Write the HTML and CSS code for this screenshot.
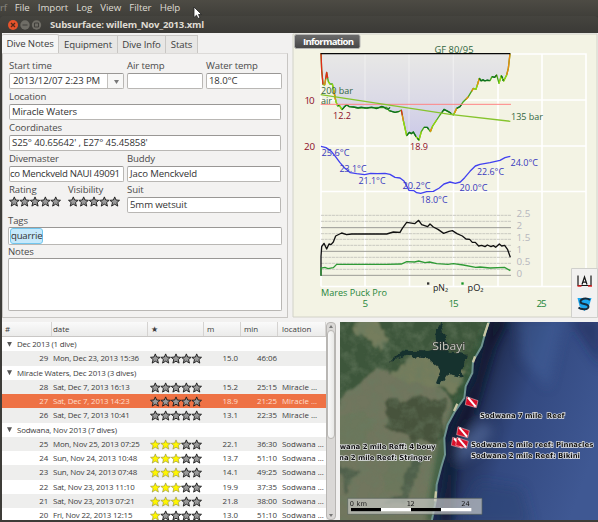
FILE: index.html
```
<!DOCTYPE html>
<html lang="en">
<head>
<meta charset="utf-8">
<title>Subsurface</title>
<link rel="stylesheet" href="styles.css">
</head>
<body>
<svg class="defs" width="0" height="0" aria-hidden="true">
  <defs>
    <path id="st" d="M5.3 .9 6.6 4 10.1 4.3 7.5 6.6 8.4 10.1 5.3 8.2 2.2 10.1 3.1 6.6 .5 4.3 4 4Z"/>
    <g id="s0"><use href="#st" fill="#999" stroke="#161616" stroke-width=".9"/></g>
    <g id="s1"><use href="#st" fill="#fff600" stroke="#8f8d38" stroke-width=".6"/></g>
    <g id="r0"><use href="#s0"/><use href="#s0" x="10.35"/><use href="#s0" x="20.7"/><use href="#s0" x="31.05"/><use href="#s0" x="41.4"/></g>
    <g id="r1"><use href="#s1"/><use href="#s0" x="10.35"/><use href="#s0" x="20.7"/><use href="#s0" x="31.05"/><use href="#s0" x="41.4"/></g>
    <g id="r3"><use href="#s1"/><use href="#s1" x="10.35"/><use href="#s1" x="20.7"/><use href="#s0" x="31.05"/><use href="#s0" x="41.4"/></g>
  </defs>
</svg>
<div class="desktop">
  <nav class="menubar"><span class="app">rf</span><span>File</span><span>Import</span><span>Log</span><span>View</span><span>Filter</span><span>Help</span></nav>
  <header class="titlebar">
    <svg class="buttons" width="34" height="12" viewBox="0 0 34 12"><circle cx="5" cy="6" r="5" fill="#e6532b"/><path d="M3 4l4 4M7 4l-4 4" stroke="#51291a" stroke-width="1.3"/><circle cx="17" cy="6" r="4.7" fill="#6f6d66"/><path d="M14.5 6h5" stroke="#403f3b"/><circle cx="28.500" cy="6" r="4.700" fill="#6f6d66"/><path d="M26.500 4h4v4h-4z" fill="none" stroke="#403f3b"/></svg>
    <h1>Subsurface: willem_Nov_2013.xml</h1>
  </header>
  <main class="window">
    <section class="top">
      <div class="notes">
        <div class="tabs"><span class="tab active">Dive Notes</span><span class="tab t2">Equipment</span><span class="tab t3">Dive Info</span><span class="tab t4">Stats</span></div>
        <form class="form">
          <div class="row three">
            <div><label>Start time</label><div class="field date"><span>2013/12/07 2:23 PM</span><i><b></b></i></div></div>
            <div><label>Air temp</label><div class="field"></div></div>
            <div><label>Water temp</label><div class="field">18.0°C</div></div>
          </div>
          <div class="row"><div><label>Location</label><div class="field">Miracle Waters</div></div></div>
          <div class="row"><div><label>Coordinates</label><div class="field coord">S25° 40.65642' , E27° 45.45858'</div></div></div>
          <div class="row two">
            <div><label>Divemaster</label><div class="field master">co Menckveld NAUI 49091</div></div>
            <div><label>Buddy</label><div class="field">Jaco Menckveld</div></div>
          </div>
          <div class="row suit">
            <div><label>Rating</label><svg class="stars" width="54" height="12"><use href="#r0"/></svg></div>
            <div><label>Visibility</label><svg class="stars" width="54" height="12"><use href="#r0"/></svg></div>
            <div><label>Suit</label><div class="field">5mm wetsuit</div></div>
          </div>
          <div class="wide"><label>Tags</label><div class="field tags"><span>quarrie</span></div></div>
          <div class="wide"><label class="short">Notes</label><div class="field area"></div></div>
        </form>
      </div>
      <div class="profile">
        <svg width="308" height="289" viewBox="290 33 308 289">
          <defs>
            <linearGradient id="depth" x1="0" y1="0" x2="0" y2="1"><stop offset="0" stop-color="#e8e8e6"/><stop offset=".5" stop-color="#dcdbe6"/><stop offset="1" stop-color="#cbc9e8"/></linearGradient>
            <linearGradient id="badge" x1="0" y1="0" x2="0" y2="1"><stop offset="0" stop-color="#6c6c6c"/><stop offset="1" stop-color="#454545"/></linearGradient>
          </defs>
          <path d="M290 33h308v289H290z" fill="#f2f1f0"/>
          <path d="M293 34h304v283H293z" fill="#f3f3e4" stroke="#d2d2c8"/>
          <path d="M321 54H586V286.500H321M365 54V286.500M409.500 54V286.500M453.500 54V286.500M498 54V286.500M542 54V286.500M321 100H586M321 146H586M321 191.500H586M321 54V286.500" fill="none" stroke="#fff" stroke-width="1.600"/>
          <g transform="translate(290 30) scale(.33333)" fill="none" stroke-width="4" stroke-linejoin="round">
            <path fill="url(#depth)" stroke="#48a819" d="M93 70L95 120 99 163 104 165 110 127 115 155 120 162 127 162 132 185 138 215 143 228 148 226 156 239 162 232 170 224 178 230 190 231 205 234 290 232 297 242 315 247 328 244 334 240 340 272 350 317 358 307 364 311 370 306 378 320 387 330 394 305 402 292 412 292 421 305 428 288 440 270 450 255 462 238 475 245 490 255 500 235 510 230 520 215 535 200 550 175 558 178 568 145 575 152 600 152 606 140 614 142 620 135 627 160 634 137 641 153 650 135 655 115 660 71"/>
            <path stroke="#fff" stroke-opacity=".35" d="M225 72V230M357 72V305M490 72V250M94 210H128"/>
            <path stroke="#96d80c" d="M99 163l5 2M115 155l5 7M127 162l5 23 6 30 5 13M148 226l8 13M340 272l10 45M378 320l9 10 7-25M421 305l7-17 12-18M490 255l10-20M550 175l8 3 10-33M627 160l7-23 7 16 9-18"/>
            <path stroke="#e12c18" d="M93 70l2 50 4 43M107 148l3-21 3 17M334 240l3 16"/>
            <path stroke="#ea8a12" d="M337 256l3 16M104 165l3-17M131 182l5 27M494 249l6-14M528 209l7-9M545 184l5-9M562 166l6-20M650 135l5-20 5-44M618 139l2-4M421 305l4-10"/>
            <path stroke="#0d6f20" d="M143 228l5-2M156 239l6-7 8-8 8 6 12 1 15 3q8-4 16-1t16 0 16 1 16-2 16 2 15-2M298 242l17 5 13-3M350 317l8-10 6 4 6-5 8 14M382 325l5 5M402 292h10l4 6M455 249l7-11 13 7 8 4M500 235l10-5 5-7M568 145l5 8 6-4 6 4 6-3 8 2M606 140l8 2 6-7M634 137l4 8M637 151l5-2"/>
            <path stroke="#080808" stroke-width="3.500" d="M92 71H661"/>
            <path stroke="#ff8585" stroke-width="3" d="M92 223H663"/>
            <path stroke="#86c42d" d="M92 194L480 253 661 274"/>
          </g>
          <g transform="translate(290 140) scale(.33333)" fill="none" stroke-width="3">
            <path stroke="#c2c2ba" stroke-width="2.500" stroke-dasharray="9 2" d="M93 226H663M93 244H663M93 281H663M93 298H663M93 316H663M93 352H663M93 370H663M93 388H663"/>
            <path stroke="#9b9b96" d="M93 263H663M93 334H663M93 406H663"/>
            <path stroke="#4040f0" stroke-width="4" stroke-linejoin="round" d="M93 19L108 23 124 34 136 49 150 68 165 85 181 98 200 101 224 104 242 100 262 101 285 100 300 103 315 112 330 114 342 123 357 151 372 152 380 158 392 160 410 155 430 154 448 144 462 132 480 126 496 130 511 126 524 113 540 94 556 78 570 73 600 68 630 61 645 53 661 49"/>
            <path stroke="#111" stroke-width="4" stroke-linejoin="round" d="M93 407V350L95 320 102 310 110 327 117 312 123 314 130 306 137 288 155 279 170 284 185 282H290L310 276 330 277 337 265 350 247 374 251 386 241 395 254 413 260 420 252 430 261 444 268 461 280 477 274 487 272 501 281 517 288 528 297 539 298 547 307 556 307 566 318 575 316 585 320 592 315 603 320 610 317 617 322 628 312 635 318 644 316 653 329 661 352"/>
            <path stroke="#2e9a35" stroke-width="4" d="M93 407V384L105 382 114 386 130 383 140 373H290L334 372 350 365 374 366 386 363 405 368 419 366 440 371 474 373 490 371 520 375 557 382 570 381 600 384 644 382 661 392"/>
            <path fill="#333" d="M411 427h7v7h-7z"/><path fill="#159525" d="M514 427h7v7h-7z"/>
          </g>
          <g class="ct">
            <text x="434.500" y="53" textLength="39" lengthAdjust="spacingAndGlyphs" fill="#316640">GF 80/95</text>
            <text x="321" y="93.500" textLength="32" lengthAdjust="spacingAndGlyphs" fill="#316640">200 bar</text>
            <text x="321" y="104" textLength="11" lengthAdjust="spacingAndGlyphs" fill="#316640">air</text>
            <text x="511" y="120" textLength="32" lengthAdjust="spacingAndGlyphs" fill="#316640">135 bar</text>
            <g fill="#8c0c28"><text x="304.500" y="104" textLength="10">10</text><text x="304" y="150" textLength="11">20</text><text x="333" y="119" textLength="18" lengthAdjust="spacingAndGlyphs">12.2</text><text x="410" y="150" textLength="18" lengthAdjust="spacingAndGlyphs">18.9</text></g>
            <g class="temp"><text x="321.500" y="156" textLength="28" lengthAdjust="spacingAndGlyphs">25.6°C</text><text x="339.500" y="171.500" textLength="27" lengthAdjust="spacingAndGlyphs">23.1°C</text><text x="358.500" y="184" textLength="27" lengthAdjust="spacingAndGlyphs">21.1°C</text><text x="402.500" y="189" textLength="28" lengthAdjust="spacingAndGlyphs">20.2°C</text><text x="420.500" y="203" textLength="27" lengthAdjust="spacingAndGlyphs">18.0°C</text><text x="459.500" y="191" textLength="28" lengthAdjust="spacingAndGlyphs">20.0°C</text><text x="477" y="174.500" textLength="27" lengthAdjust="spacingAndGlyphs">22.6°C</text><text x="510.500" y="166" textLength="27.500" lengthAdjust="spacingAndGlyphs">24.0°C</text></g>
            <g fill="#b6b6bd"><text x="516.500" y="217">2.5</text><text x="516.500" y="229">2</text><text x="516.500" y="241">1.5</text><text x="516.500" y="253">1</text><text x="516.500" y="265">0.5</text><text x="516.500" y="277">0</text></g>
            <text x="433" y="291" textLength="15" lengthAdjust="spacingAndGlyphs" fill="#171717">pN₂</text><text x="467.500" y="291" textLength="16" lengthAdjust="spacingAndGlyphs" fill="#171717">pO₂</text>
            <g fill="#26863a"><text x="321" y="296" textLength="66" lengthAdjust="spacingAndGlyphs">Mares Puck Pro</text><text x="362.500" y="306.500">5</text><text x="448.500" y="306.500" textLength="10">15</text><text x="536.500" y="306.500" textLength="10">25</text></g>
          </g>
          <rect x="294.500" y="34.500" width="65.500" height="14" rx="2" fill="url(#badge)" stroke="#b6b6b4"/>
          <text class="info" x="303" y="45" textLength="51">Information</text>
          <path d="M571.500 268.500h26v49h-26z" fill="#f2f1f0" stroke="#d0d0cc"/>
          <path d="M578 275.500V285.500h13V275.500M582 284.500L584.500 277 587 284.500M583.200 282.200h2.600" fill="none" stroke="#161616" stroke-width="1.200"/><path d="M577.500 286h4M588 286h4" stroke="#dc2524" stroke-width="1.300"/>
          <path d="M577.500 298h14l-2.500 8-4.500 5-5-5Z" fill="#1ca7ef"/><path d="M590 300C586 297 580 299 580.500 302 581 305 588 303 588.500 306.500 589 310 581 310 578.500 307.500" fill="none" stroke="#172b3b" stroke-width="1.900"/>
        </svg>
      </div>
    </section>
    <section class="bottom">
      <div class="list">
        <div class="tr head"><span>#</span><span>date</span><span>★</span><span>m</span><span>min</span><span>location</span></div>
        <div class="group">Dec 2013 (1 dive)</div>
        <div class="tr odd"><span>29</span><span>Mon, Dec 23, 2013 15:36</span><svg><use href="#r0"/></svg><span>15.0</span><span>46:06</span><span></span></div>
        <div class="group">Miracle Waters, Dec 2013 (3 dives)</div>
        <div class="tr odd"><span>28</span><span>Sat, Dec 7, 2013 16:13</span><svg><use href="#r0"/></svg><span>15.2</span><span>25:15</span><span>Miracle ...</span></div>
        <div class="tr selected"><span>27</span><span>Sat, Dec 7, 2013 14:23</span><svg><use href="#r0"/></svg><span>18.9</span><span>21:25</span><span>Miracle ...</span></div>
        <div class="tr odd"><span>26</span><span>Sat, Dec 7, 2013 10:41</span><svg><use href="#r0"/></svg><span>13.1</span><span>22:35</span><span>Miracle ...</span></div>
        <div class="group">Sodwana, Nov 2013 (7 dives)</div>
        <div class="tr odd"><span>25</span><span>Mon, Nov 25, 2013 07:25</span><svg><use href="#r3"/></svg><span>22.1</span><span>36:30</span><span>Sodwana ...</span></div>
        <div class="tr"><span>24</span><span>Sun, Nov 24, 2013 10:48</span><svg><use href="#r3"/></svg><span>13.7</span><span>51:10</span><span>Sodwana ...</span></div>
        <div class="tr odd"><span>23</span><span>Sun, Nov 24, 2013 07:48</span><svg><use href="#r3"/></svg><span>14.1</span><span>49:25</span><span>Sodwana ...</span></div>
        <div class="tr"><span>22</span><span>Sat, Nov 23, 2013 11:10</span><svg><use href="#r3"/></svg><span>19.9</span><span>37:35</span><span>Sodwana ...</span></div>
        <div class="tr odd"><span>21</span><span>Sat, Nov 23, 2013 07:21</span><svg><use href="#r3"/></svg><span>21.8</span><span>38:00</span><span>Sodwana ...</span></div>
        <div class="tr"><span>20</span><span>Fri, Nov 22, 2013 12:15</span><svg><use href="#r1"/></svg><span>13.0</span><span>51:10</span><span>Sodwana ...</span></div>
      </div>
      <div class="scroll"><i class="up"></i><b></b><i class="down"></i></div>
      <svg class="map" width="258" height="198" viewBox="15 12 774 594">
        <defs>
          <linearGradient id="sea" gradientUnits="userSpaceOnUse" x1="370" y1="250" x2="780" y2="400"><stop offset="0" stop-color="#17213c"/><stop offset=".18" stop-color="#25345d"/><stop offset=".42" stop-color="#334980"/><stop offset="1" stop-color="#3f5893"/></linearGradient>
          <filter id="b5" x="-30%" y="-30%" width="160%" height="160%"><feGaussianBlur stdDeviation="6"/></filter>
          <filter id="b18" x="-50%" y="-50%" width="200%" height="200%"><feGaussianBlur stdDeviation="16"/></filter>
          <filter id="rough" x="-5%" y="-5%" width="110%" height="110%"><feTurbulence type="fractalNoise" baseFrequency=".022" numOctaves="4" seed="7" result="n"/><feDisplacementMap in="SourceGraphic" in2="n" scale="50" xChannelSelector="R" yChannelSelector="G"/><feGaussianBlur stdDeviation="3"/></filter>
          <filter id="shore" x="-5%" y="-5%" width="110%" height="110%"><feTurbulence type="fractalNoise" baseFrequency=".04" numOctaves="3" seed="3" result="n"/><feDisplacementMap in="SourceGraphic" in2="n" scale="22" xChannelSelector="R" yChannelSelector="G"/><feGaussianBlur stdDeviation="2"/></filter>
          <filter id="grain" x="0" y="0" width="100%" height="100%"><feTurbulence type="fractalNoise" baseFrequency=".03" numOctaves="4" seed="12"/><feColorMatrix values="0 0 0 0 .14  0 0 0 0 .2  0 0 0 0 .12  1.800 0 0 0 -.7"/></filter>
          <clipPath id="land"><path id="coast" d="M0 0H466L452 40 440 85 414 130 412 165 392 205 388 240 360 280 338 320 328 360 330 410 318 450 305 500 303 545 290 610H0Z"/></clipPath>
          <g id="flag"><path d="M-15-16L19-4 14 17-19 8Z" fill="#d9102a" stroke="#f8dada" stroke-width="1.500"/><path d="M-11-13L12 14" stroke="#fff" stroke-width="6"/></g>
        </defs>
        <path d="M0 0H800V620H0Z" fill="url(#sea)"/>
        <g filter="url(#b18)"><path d="M470 0L420 190 350 350 315 620H345L360 420 425 260 475 90 520 0Z" fill="#11182c"/><path d="M550 0L690 0 640 210 560 120Z" fill="#4865a0" opacity=".45"/><path d="M440 310l35 25-40 60-65 40-5-55Z" fill="#5f78aa" opacity=".55"/><path d="M700 0h100v150Z" fill="#1e2c58" opacity=".55"/><path d="M370 620l60-130 130 20 30 110Z" fill="#2a3f71" opacity=".5"/></g>
        <g clip-path="url(#land)">
          <path d="M0 0H480V620H0Z" fill="#71765e"/>
          <g filter="url(#rough)">
            <path d="M0 0H480L450 190 360 330 340 230 250 190 130 150 60 200 0 250Z" fill="#3c573b"/>
            <path d="M50 30L115 0 170 65 130 95ZM250 100L400 165 370 225 250 200 170 170Z" fill="#757d5d"/>
            <path d="M160 240L330 245 320 365 235 370 150 330Z" fill="#414d37" opacity=".85"/>
            <path d="M10 290L85 280 130 330 60 390 0 410ZM150 430l130-40-40 100-90 30ZM300 380l30 60-35 150-35-10Z" fill="#6c775c"/>
            <path d="M0 440l70 20-40 60ZM240 415l20 10-50 130-60 20 55-90Z" fill="#3d5440" opacity=".6"/>
          </g>
          <path d="M0 0H480V620H0Z" filter="url(#grain)" opacity=".65"/>
          <g filter="url(#b5)"><path d="M480 0L380 260 330 390 295 610" fill="none" stroke="#2c5237" stroke-width="45" opacity=".55"/></g>
          <path d="M318 8l12 50 12 42 54 10-16 66-40-8-20 28-16-2 14-36-46-40-50-4-54 14 34-30 68 2 34-10-2-40Z" fill="#17302f" filter="url(#shore)"/>
        </g>
        <path d="M466 0L452 40 440 85 414 130 412 165 392 205 388 240 360 280 338 320 328 360 330 410 318 450 305 500 303 545 290 610" fill="none" stroke="#6f9490" stroke-width="6"/>
        <path d="M460 15L447 55M420 115l-6 18M367 257l-10 22M303 520l-3 30" stroke="#c9c7a5" stroke-width="7"/>
        <use href="#flag" x="410" y="252"/><use href="#flag" x="384" y="342"/><use href="#flag" x="368" y="374"/><use href="#flag" x="381" y="374"/>
        <text class="lake" x="292" y="96" textLength="99" lengthAdjust="spacingAndGlyphs">Sibayi</text>
        <g class="place"><text x="435" y="300" textLength="254" xml:space="preserve">Sodwana 7 mile  Reef</text><text x="408" y="387" textLength="367">Sodwana 2 mile reef: Pinnacles</text><text x="408" y="420" textLength="327">Sodwana 2 mile Reef: Bikini</text><text x="14" y="394" textLength="288">wana 2 mile Reff: 4 bouy</text><text x="12" y="425" textLength="276">na 2 mile Reef: Stringer</text></g>
        <path d="M38 541H441V589H38Z" fill="#cccbc8" fill-opacity=".68" stroke="#58615a" stroke-width="2"/>
        <path d="M48 570H409V580H48Z" fill="#fff"/><path d="M48 570h90v10H48ZM228 570h90v10h-90Z" fill="#000"/>
        <g class="scale"><text x="44" y="563" textLength="52">0 km</text><text x="215" y="563" textLength="24">12</text><text x="379" y="563" textLength="25">24</text></g>
      </svg>
    </section>
  </main>
</div>
<svg class="cursor" width="10" height="14" viewBox="0 0 10 14"><path d="M1 1V11.500L3.500 9.200 5 12.500 6.900 11.600 5.500 8.500H8.500Z" fill="#fff" stroke="#222" stroke-width=".8"/></svg>
</body>
</html>
```
FILE: styles.css
```
* { box-sizing: border-box; }
body { margin: 0; width: 598px; height: 522px; overflow: hidden; font: 9.6px/12px "Open Sans", "Noto Sans", sans-serif; color: #3c3c3c; }
.defs, .cursor { position: absolute; }
.cursor { left: 193px; top: 6px; }
.desktop { display: flex; flex-direction: column; height: 522px; background: #3d3c38; }
.menubar { height: 16px; display: flex; padding-top: 1px; gap: 8.2px; background: linear-gradient(#4d4b44, #403f3a); color: #dedbd2; font-size: 9.7px; line-height: 13px; letter-spacing: -.1px; }
.menubar .app { color: #8c8a82; margin-right: -.5px; }
.titlebar { height: 17px; display: flex; align-items: center; padding-left: 8px; gap: 8px; background: linear-gradient(#45443f, #3b3a36); color: #dfdbd2; border-radius: 4px 4px 0 0; }
.titlebar h1 { margin: 0; font-size: 9.6px; line-height: 15px; font-weight: 700; letter-spacing: -.2px; }
.window { height: 487px; margin-left: 2px; background: #f2f1f0; display: flex; flex-direction: column; }
.top { display: flex; height: 289px; }
.notes { width: 288px; padding-top: 1px; letter-spacing: -.12px; }
.tabs { display: flex; height: 19px; align-items: flex-end; }
.tab { height: 18px; line-height: 17px; text-align: center; background: #e8e7e5; border: 1px solid #c9c7c4; border-left: 0; border-bottom: 0; width: 59px; }
.tab.active { height: 19px; width: 57px; background: #f5f5f4; border-radius: 2px 2px 0 0; }
.tab.t3 { width: 48px; }
.tab.t4 { width: 32px; }
.form { width: 286px; height: 265px; padding: 4px 6px 0; border: 1px solid #c8c6c3; border-top-color: #dcdad8; background: #f3f2f1; }
.row { display: grid; height: 31.1px; }
.form label { display: block; height: 15px; line-height: 16px; color: #4b4b4b; white-space: nowrap; }
.three { grid-template-columns: 115px 76px 76px; column-gap: 3px; }
.two { grid-template-columns: 115px 154px; column-gap: 3px; }
.suit { grid-template-columns: 59px 56px 154px; column-gap: 0; }
.suit > :last-child { margin-left: 3px; width: 154px; }
.field { height: 16px; line-height: 14px; border: 1px solid #b9b7b4; border-top-color: #999795; border-radius: 2px; background: #fff; padding: 0 2px; white-space: nowrap; overflow: hidden; color: #333; }
.date { display: flex; justify-content: space-between; padding: 0 0 0 3px; }
.date i { width: 16px; border-left: 1px solid #c3c1be; background: #f7f7f6; padding: 6px 0 0 6px; }
.date b { display: block; width: 5px; height: 4px; background: #777; clip-path: polygon(0 0, 100% 0, 50% 100%); }
.master { padding: 0; letter-spacing: -.28px; }
.stars { display: block; margin-top: -1px; }
.wide { width: 274px; margin-left: -1px; }
.wide label { height: 14px; }
.wide .short { height: 13px; line-height: 13px; }
.tags { height: 18px; line-height: 14px; padding: 0 1px; }
.tags span { display: inline-block; height: 16px; line-height: 14px; border: 1px solid #71c6ee; border-radius: 3px; background: #c6e9fb; padding: 0; letter-spacing: -.2px; }
.area { height: 53px; }
.profile { width: 308px; }
.profile svg { display: block; }
.ct { font: 9.8px "Open Sans", "Noto Sans", sans-serif; }
.temp { fill: #3838bd; }
.info { font: 700 9.6px "Open Sans", "Noto Sans", sans-serif; fill: #fff; }
.bottom { display: flex; height: 198px; }
.list { width: 324px; height: 198px; overflow: hidden; background: #fff; font-size: 7.9px; letter-spacing: -.18px; }
.tr { height: 14.27px; line-height: 14px; display: grid; grid-template-columns: 50px 96px 56px 37px 37px 48px; white-space: nowrap; }
.tr > span { padding: 0 3px; }
.tr:not(.head) > :nth-child(1), .tr:not(.head) > :nth-child(4) { text-align: right; padding-right: 3px; }
.tr:not(.head) > :nth-child(1) { padding-right: 4px; }
.tr:not(.head) > :nth-child(5) { text-align: right; padding-right: 1px; }
.tr > :nth-child(2) { padding-left: 1px; }
.tr > :nth-child(4), .tr > :nth-child(5), .tr > :nth-child(6) { letter-spacing: 0; }
.tr > :nth-child(6) { padding: 0 0 0 4px; }
.tr svg { width: 56px; height: 13px; padding: 2px 0 0 2px; }
.odd { background: #eeeeed; }
.selected { background: #ee7245; color: #ffdfcc; }
.head { height: 15px; line-height: 14px; letter-spacing: 0; background: linear-gradient(#fafafa, #ebebea); border-bottom: 1px solid #c9c7c5; }
.head > span { border-right: 1px solid #d5d3d1; }
.group { height: 14.27px; line-height: 14px; padding-left: 5px; display: flex; align-items: center; gap: 5px; }
.group::before { content: ""; width: 5px; height: 5px; background: #555; clip-path: polygon(0 0, 100% 0, 50% 100%); }
.scroll { width: 10px; height: 198px; flex: none; background: #dad8d6; border: 1px solid #b8b6b3; border-radius: 4px; display: flex; flex-direction: column; align-items: center; }
.scroll b { width: 8px; height: 109px; border: 1px solid #b9b7b4; border-radius: 4px; background: linear-gradient(90deg, #fafafa, #e8e8e6); margin-bottom: auto; }
.scroll i { width: 4px; height: 3px; margin: 2px; background: #777; clip-path: polygon(0 0, 100% 0, 50% 100%); }
.scroll .up { transform: rotate(180deg); }
.map { margin-left: 4px; display: block; flex: none; }
.lake { font: 32px "Open Sans", sans-serif; fill: #c6c9bf; stroke: #3a3d38; stroke-width: 3px; paint-order: stroke; }
.place { font: 700 21px "DejaVu Sans", sans-serif; fill: #111; stroke: #e5e7ea; stroke-width: 4px; paint-order: stroke; }
.scale { font: 20px "DejaVu Sans", sans-serif; fill: #151515; }
```
